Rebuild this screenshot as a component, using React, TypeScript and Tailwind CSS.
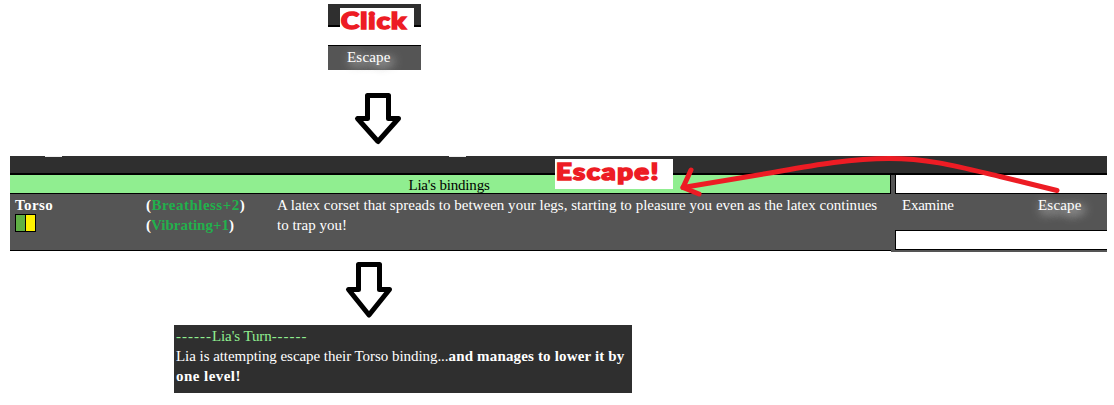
function DownArrow({ tall = false, className }: { tall?: boolean; className: string }) {
  return (
    <svg width="50" height="60" viewBox="0 0 50 60" fill="none" className={className}>
      <path
        d={
          tall
            ? "M14.500 4.500H35.500V29.500H45.500L25 55L4.500 29.500H14.500Z"
            : "M14.500 4.500H35.500V27.500H45.500L25 50.500L4.500 27.500H14.500Z"
        }
        stroke="black"
        strokeWidth="5"
        strokeLinejoin="round"
      />
    </svg>
  );
}

function SweepArrow() {
  return (
    <svg
      width="400"
      height="56"
      viewBox="672 148 400 56"
      fill="none"
      stroke="#ed1c24"
      strokeWidth="5"
      strokeLinecap="round"
      strokeLinejoin="round"
      className="absolute left-[662px] top-[-8px]"
    >
      <path d="M1057 190.500L1000 176.500C960 167 930 158.500 889 158.500C850 158.500 810 166 773 172.500L683 187.500" />
      <path d="M691 170L683 187.500L699 194" />
    </svg>
  );
}

function QuickPanel() {
  return (
    <div className="ml-[328px] w-[93px]">
      <div className="relative h-[23px] border-b-2 border-black bg-[#2f2f2f]">
        <div className="absolute left-3 top-1 h-7 w-[74px] bg-white pl-px font-['Lato'] text-[22px] font-black leading-[26px] text-[#ed1c24] [-webkit-text-stroke:1.6px_#ed1c24]">
          <span className="inline-block origin-left scale-x-[1.25] tracking-[0.9px]">Click</span>
        </div>
      </div>
      <div className="mt-[18px] h-[25px] border-t border-black bg-[#555] pl-[19px] leading-[22px] tracking-[0.2px] text-white">
        <span className="[text-shadow:3px_3px_12px_#fff,4px_4px_8px_#999]">Escape</span>
      </div>
    </div>
  );
}

function BindingsPanel() {
  return (
    <div className="relative ml-[10px] h-[96px] w-[1097px]">
      <div className="flex h-[19px] border-b-2 border-black bg-[#2f2f2f]">
        <div className="ml-[35px] h-px w-[17px] bg-[#eee]" />
        <div className="ml-[387px] h-px w-[17px] bg-[#eee]" />
      </div>
      <div className="flex">
        <div className="w-[881px]">
          <div className="h-[19px] border-b border-r border-black bg-[#90ee90] pr-[2px] text-center leading-[20px] tracking-[-0.2px] text-black">
            Lia's bindings
          </div>
          <div className="flex h-[57px] border-b border-black bg-[#555] pl-[5px] leading-5 text-white">
            <div className="w-[131px] font-bold">
              <div className="h-5 pt-px tracking-[0.4px]">Torso</div>
              <div className="flex h-[18px] w-[21px] border border-black">
                <div className="w-[10px] border-r border-black bg-[#60b044]" />
                <div className="flex-1 bg-[#fff200]" />
              </div>
            </div>
            <div className="w-[131px] pt-px font-bold">
              <div className="tracking-[0.48px]">(<span className="text-[#22b14c]">Breathless+2</span>)</div>
              <div>(<span className="text-[#22b14c]">Vibrating+1</span>)</div>
            </div>
            <div className="whitespace-nowrap pt-px">
              <div className="tracking-[0.02px]">A latex corset that spreads to between your legs, starting to pleasure you even as the latex continues</div>
              <div>to trap you!</div>
            </div>
          </div>
        </div>
        <div className="h-[77px] flex-1 bg-[#555] pl-1">
          <div className="h-[19px] border-b border-l border-black bg-white" />
          <div className="flex h-9 pl-[7px] pt-px leading-5 text-white">
            <span className="w-[136px] tracking-[-0.25px]">Examine</span>
            <span className="tracking-[0.2px] [text-shadow:3px_3px_12px_#fff,4px_4px_8px_#999]">Escape</span>
          </div>
          <div className="h-5 border-y border-l border-black bg-white" />
        </div>
      </div>
      <div className="absolute left-[545px] top-[3px] h-[30px] w-[118px] bg-white pl-px font-['Lato'] text-[22px] font-black leading-[26px] text-[#ed1c24] [-webkit-text-stroke:1.6px_#ed1c24]">
        <span className="inline-block origin-left scale-x-[1.25] tracking-[1.2px]">Escape!</span>
      </div>
      <SweepArrow />
    </div>
  );
}

function TurnLog() {
  return (
    <div className="ml-[174px] h-[68px] w-[458px] whitespace-nowrap bg-[#2f2f2f] pl-[2px] pt-px leading-5 text-white">
      <div className="text-[#90ee90]">
        <span className="tracking-[1px]">------</span>
        <span className="tracking-[-0.1px]">Lia's Turn</span>
        <span className="tracking-[1px]">------</span>
      </div>
      <div className="tracking-[-0.05px]">
        Lia is attempting escape their Torso binding...
        <b className="tracking-[0.16px]">and manages to lower it by</b>
      </div>
      <b className="tracking-[0.45px]">one level!</b>
    </div>
  );
}

export default function App() {
  return (
    <main className="h-[405px] w-[1114px] overflow-hidden bg-white pt-1 font-['Liberation_Serif','Times_New_Roman',serif] text-[15px]">
      <QuickPanel />
      <DownArrow className="ml-[353px] mt-[21px] mb-[5px] block" />
      <BindingsPanel />
      <DownArrow tall className="ml-[344px] mt-[8px] mb-[5px] block" />
      <TurnLog />
    </main>
  );
}
